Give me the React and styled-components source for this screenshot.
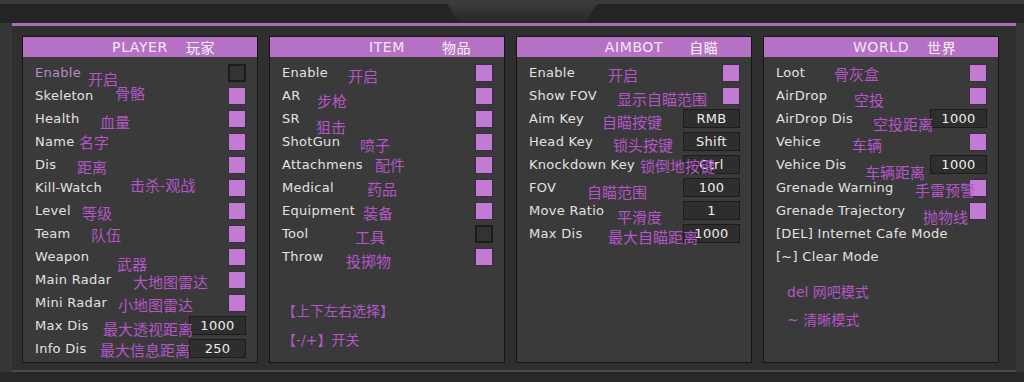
import React from "react";
import styled, { createGlobalStyle } from "styled-components";

const GlobalStyle = createGlobalStyle`
  html, body { margin: 0; padding: 0; background: #353535; }
  body { width: 1024px; height: 382px; overflow: hidden; font-family: "DejaVu Sans", "Noto Sans CJK SC", sans-serif; }
`;

const Page = styled.div`
  width: 1024px;
  height: 382px;
  display: flex;
  flex-direction: column;
  background: #363636;
`;

const TopBar = styled.div`
  height: 23px;
  box-sizing: border-box;
  border-top: 4px solid #3b3b3b;
  background: #242424;
  display: flex;
  justify-content: center;
  align-items: flex-end;
  padding-left: 20px;
`;

const Tab = styled.div`
  width: 150px;
  height: 19px;
  background: linear-gradient(#3a3a3a, #272727);
  clip-path: polygon(0 0, 100% 0, 92% 100%, 8% 100%);
`;

const Frame = styled.div`
  margin: 0 8px 0 12px;
  box-sizing: border-box;
  height: 349px;
  border-top: 3px solid #a472b3;
  border-bottom: 2px solid #4a4a4a;
  background: #2f2f2f;
  padding: 10px 15px 7px 10px;
  display: grid;
  grid-template-columns: repeat(4, 236px);
  column-gap: 11px;
`;

const BottomStrip = styled.div`
  flex: 1;
  background: #282828;
`;

const Panel = styled.div`
  box-sizing: border-box;
  height: 327px;
  border: 1px solid #151515;
  background: #3a3a3a;
  display: flex;
  flex-direction: column;
`;

const Header = styled.div`
  height: 20px;
  background: #b572c5;
  display: grid;
  grid-template-columns: 1fr auto 1fr;
  align-items: center;
  color: #f6e6f8;
  font-size: 14px;
  letter-spacing: 0.6px;
`;

const HeaderEn = styled.span`
  grid-column: 2;
`;

const HeaderCn = styled.span`
  grid-column: 3;
  margin-left: ${(p) => p.$gap}px;
  font-family: "Noto Sans CJK SC", sans-serif;
  font-size: 14px;
  color: #fbf0fc;
`;

const Body = styled.div`
  padding: 4px 11px 0 12px;
  display: flex;
  flex-direction: column;
`;

const Row = styled.div`
  position: relative;
  height: 23px;
  display: flex;
  align-items: center;
`;

const Label = styled.span`
  color: ${(p) => (p.$active ? "#b789c4" : "#e2e2e2")};
  font-size: 13px;
  letter-spacing: 0.3px;
  white-space: nowrap;
`;

const Cn = styled.span`
  position: absolute;
  left: ${(p) => p.$x}px;
  top: 50%;
  transform: translateY(calc(-50% + ${(p) => p.$dy}px));
  color: #b356c6;
  font-family: "Noto Sans CJK SC", sans-serif;
  font-size: 15px;
  line-height: 1;
  white-space: nowrap;
  z-index: 2;
`;

const Check = styled.span`
  margin-left: auto;
  width: 18px;
  height: 18px;
  box-sizing: border-box;
  background: ${(p) => (p.$on ? "#c17bd3" : "#333333")};
  border: ${(p) => (p.$on ? "1px solid #3d2a44" : "2px solid #1c1c1c")};
`;

const ValueBox = styled.span`
  margin-left: auto;
  width: 57px;
  height: 19px;
  box-sizing: border-box;
  background: #2e2e2e;
  border: 1px solid #1d1d1d;
  color: #ededed;
  font-size: 13px;
  display: flex;
  align-items: center;
  justify-content: center;
  letter-spacing: 0.3px;
`;

const Notes = styled.div`
  display: flex;
  flex-direction: column;
  gap: ${(p) => p.$gap}px;
  margin-top: ${(p) => p.$top}px;
  padding-left: ${(p) => p.$indent}px;
`;

const Note = styled.div`
  height: 23px;
  line-height: 23px;
  color: #b356c6;
  font-family: "DejaVu Sans", "Noto Sans CJK SC", sans-serif;
  font-size: 14px;
  white-space: nowrap;
`;

const panels = [
  {
    en: "PLAYER",
    cn: "玩家",
    gap: 18,
    rows: [
      { l: "Enable", c: "开启", x: 53, dy: 5, check: false, active: true },
      { l: "Skeleton", c: "骨骼", x: 80, dy: -4, check: true },
      { l: "Health", c: "血量", x: 65, dy: 2, check: true },
      { l: "Name", c: "名字", x: 44, dy: -1, check: true },
      { l: "Dis", c: "距离", x: 42, dy: 1, check: true },
      { l: "Kill-Watch", c: "击杀-观战", x: 95, dy: -4, check: true },
      { l: "Level", c: "等级", x: 47, dy: 1, check: true },
      { l: "Team", c: "队伍", x: 56, dy: 0, check: true },
      { l: "Weapon", c: "武器", x: 82, dy: 6, check: true },
      { l: "Main Radar", c: "大地图雷达", x: 98, dy: 1, check: true },
      { l: "Mini Radar", c: "小地图雷达", x: 83, dy: 1, check: true },
      { l: "Max Dis", c: "最大透视距离", x: 68, dy: 2, value: "1000" },
      { l: "Info Dis", c: "最大信息距离", x: 65, dy: 0, value: "250" },
    ],
  },
  {
    en: "ITEM",
    cn: "物品",
    gap: 37,
    rows: [
      { l: "Enable", c: "开启", x: 66, dy: 2, check: true },
      { l: "AR", c: "步枪", x: 35, dy: 4, check: true },
      { l: "SR", c: "狙击", x: 34, dy: 7, check: true },
      { l: "ShotGun", c: "喷子", x: 78, dy: 2, check: true },
      { l: "Attachmens", c: "配件", x: 93, dy: -1, check: true },
      { l: "Medical", c: "药品", x: 85, dy: 0, check: true },
      { l: "Equipment", c: "装备", x: 81, dy: 1, check: true },
      { l: "Tool", c: "工具", x: 73, dy: 2, check: false },
      { l: "Throw", c: "投掷物", x: 64, dy: 3, check: true },
    ],
    notes: { top: 32, gap: 6, indent: 0, items: ["【上下左右选择】", "【-/+】开关"] },
  },
  {
    en: "AIMBOT",
    cn: "自瞄",
    gap: 26,
    rows: [
      { l: "Enable", c: "开启", x: 79, dy: 1, check: true },
      { l: "Show FOV", c: "显示自瞄范围", x: 88, dy: 2, check: true },
      { l: "Aim Key", c: "自瞄按键", x: 73, dy: 2, value: "RMB" },
      { l: "Head Key", c: "锁头按键", x: 84, dy: 2, value: "Shift" },
      { l: "Knockdown Key", c: "锁倒地按键", x: 111, dy: 0, value: "Ctrl" },
      { l: "FOV", c: "自瞄范围", x: 58, dy: 3, value: "100" },
      { l: "Move Ratio", c: "平滑度", x: 88, dy: 5, value: "1" },
      { l: "Max Dis", c: "最大自瞄距离", x: 79, dy: 2, value: "1000" },
    ],
  },
  {
    en: "WORLD",
    cn: "世界",
    gap: 18,
    rows: [
      { l: "Loot", c: "骨灰盒", x: 58, dy: 0, check: true },
      { l: "AirDrop", c: "空投", x: 78, dy: 3, check: true },
      { l: "AirDrop Dis", c: "空投距离", x: 97, dy: 4, value: "1000" },
      { l: "Vehice", c: "车辆", x: 76, dy: 2, check: true },
      { l: "Vehice Dis", c: "车辆距离", x: 89, dy: 6, value: "1000" },
      { l: "Grenade Warning", c: "手雷预警", x: 139, dy: 1, check: true },
      { l: "Grenade Trajectory", c: "抛物线", x: 147, dy: 5, check: true },
      { l: "[DEL] Internet Cafe Mode" },
      { l: "[~] Clear Mode" },
    ],
    notes: { top: 13, gap: 5, indent: 11, items: ["del 网吧模式", "~ 清晰模式"] },
  },
];

function SettingRow({ row }) {
  return (
    <Row>
      <Label $active={row.active}>{row.l}</Label>
      {row.c && (
        <Cn $x={row.x} $dy={row.dy}>
          {row.c}
        </Cn>
      )}
      {row.check !== undefined && <Check $on={row.check} />}
      {row.value !== undefined && <ValueBox>{row.value}</ValueBox>}
    </Row>
  );
}

export default function App() {
  return (
    <>
      <GlobalStyle />
      <Page>
        <TopBar>
          <Tab />
        </TopBar>
        <Frame>
          {panels.map((p) => (
            <Panel key={p.en}>
              <Header>
                <HeaderEn>{p.en}</HeaderEn>
                <HeaderCn $gap={p.gap}>{p.cn}</HeaderCn>
              </Header>
              <Body>
                {p.rows.map((r) => (
                  <SettingRow key={r.l} row={r} />
                ))}
                {p.notes && (
                  <Notes $top={p.notes.top} $gap={p.notes.gap} $indent={p.notes.indent}>
                    {p.notes.items.map((n) => (
                      <Note key={n}>{n}</Note>
                    ))}
                  </Notes>
                )}
              </Body>
            </Panel>
          ))}
        </Frame>
        <BottomStrip />
      </Page>
    </>
  );
}
